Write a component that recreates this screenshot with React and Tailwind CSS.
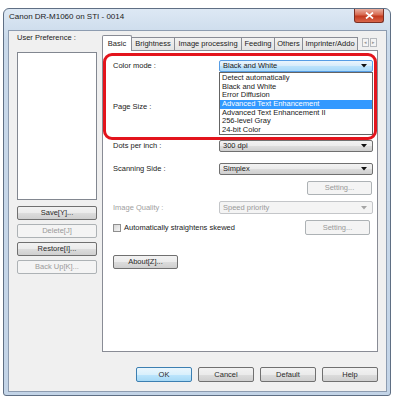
import React from "react";

const font = "font-['Liberation_Sans',Arial,sans-serif]";

function Arrow({ disabled }) {
  return (
    <svg width="6" height="4" viewBox="0 0 6 4" className="shrink-0">
      <path d="M0 0h6L3 3.5z" fill={disabled ? "#a5a5a5" : "#111"} />
    </svg>
  );
}

function Combo({ text, kind = "normal", className = "" }) {
  const look =
    kind === "open"
      ? "border-[#569de5] bg-[linear-gradient(#eaf5fd,#d7ecfb_50%,#bde3fb_50%,#a9d9f9)] text-[#1a1a1a]"
      : kind === "disabled"
      ? "border-[#c4c6c9] bg-[#f4f4f4] text-[#9a9a9a]"
      : "border-[#707070] bg-[linear-gradient(#f2f2f2,#ebebeb_50%,#dddddd_50%,#cfcfcf)] text-[#1a1a1a]";
  return (
    <div
      className={`flex w-[154px] items-center justify-between rounded-[2px] border pl-[3px] pr-[5px] ${look} ${className}`}
    >
      <span className="leading-none">{text}</span>
      <Arrow disabled={kind === "disabled"} />
    </div>
  );
}

function Btn({ children, kind = "normal", className = "" }) {
  const look =
    kind === "focus"
      ? "border-[#3c7fb1] bg-[linear-gradient(#eaf6fd,#d9f0fc_50%,#bee6fd_50%,#a7d9f5)] text-[#2a2a2a]"
      : kind === "disabled"
      ? "border-[#adb2b5] bg-[#f4f4f4] text-[#9a9a9a]"
      : "border-[#707070] bg-[linear-gradient(#f2f2f2,#ebebeb_50%,#dddddd_50%,#cfcfcf)] text-[#2a2a2a]";
  return (
    <div
      className={`flex items-center justify-center rounded-[2px] border font-normal leading-none ${look} ${className}`}
    >
      {children}
    </div>
  );
}

const tabs = [
  { label: "Brightness", w: "w-[43px]" },
  { label: "Image processing", w: "w-[67px]" },
  { label: "Feeding", w: "w-[33px]" },
  { label: "Others", w: "w-[28px]" },
  { label: "Imprinter/Addo", w: "w-[55px]" },
];

const modes = [
  "Detect automatically",
  "Black and White",
  "Error Diffusion",
  "Advanced Text Enhancement",
  "Advanced Text Enhancement II",
  "256-level Gray",
  "24-bit Color",
];

export default function App() {
  return (
    <div className={`h-[401px] w-[393px] overflow-hidden bg-white pl-[3px] pt-[8px] text-[7.5px] text-[#222] ${font}`}>
      {/* window frame */}
      <div className="flex h-[388px] w-[388px] flex-col rounded-t-[6px] rounded-b-[3px] border border-[#5f6f84] bg-[linear-gradient(#dde8f4,#c9d9ea_30px,#c3d4e7)]">
        {/* title bar */}
        <div className="flex h-[21px] shrink-0 items-start justify-between">
          <span className="pl-[5px] text-[8px] leading-[16px] text-[#1b1b1b]">
            Canon DR-M1060 on STI - 0014
          </span>
          <div className="mr-[6px] flex h-[14px] w-[30px] items-center justify-center rounded-b-[3px] border border-t-0 border-[#7b2f23] bg-[linear-gradient(#eab0a1,#d7684f_45%,#c23a1f_55%,#d9664a)]">
            <svg width="9" height="7" viewBox="0 0 9 7">
              <path d="M1 0.5l7 6M8 0.5l-7 6" stroke="#fff" strokeWidth="1.7" />
            </svg>
          </div>
        </div>

        {/* client area */}
        <div className="ml-[4px] mr-[3px] flex h-[362px] flex-col border border-[#8d9cb0] bg-[#f0f0f0] pl-[8px] pr-[8px] pt-[2px]">
          <div className="flex gap-[5px]">
            {/* left panel */}
            <div className="flex w-[80px] flex-col">
              <div className="h-[10px] leading-[10px]">User Preference :</div>
              <div className="mt-[9px] h-[148px] border border-[#828790] bg-white" />
              <div className="mt-[6px] flex flex-col gap-[4px]">
                <Btn className="h-[14px]">Save[Y]...</Btn>
                <Btn className="h-[14px]" kind="disabled">Delete[J]</Btn>
                <Btn className="h-[14px]">Restore[I]...</Btn>
                <Btn className="h-[14px]" kind="disabled">Back Up[K]...</Btn>
              </div>
            </div>

            {/* tab control */}
            <div className="mt-[2px] flex w-[276px] flex-col">
              <div className="flex h-[15px] items-end">
                <div className="relative z-10 -mb-[1px] flex h-[16px] w-[30px] items-center justify-center rounded-t-[2px] border border-b-0 border-[#898c95] bg-white">
                  Basic
                </div>
                {tabs.map((t) => (
                  <div
                    key={t.label}
                    className={`flex h-[13px] ${t.w} items-center justify-center overflow-hidden whitespace-nowrap border border-b-0 border-l-0 border-[#898c95] bg-[linear-gradient(#f2f2f2,#e3e3e3)]`}
                  >
                    {t.label}
                  </div>
                ))}
                <div className="mb-[3px] ml-auto flex gap-[1px] pr-[1px]">
                  {["◂", "▸"].map((a) => (
                    <div
                      key={a}
                      className="flex h-[9px] w-[7px] items-center justify-center border border-[#b5b9be] bg-[#f4f4f4] text-[5px] leading-none text-[#9a9a9a]"
                    >
                      {a}
                    </div>
                  ))}
                </div>
              </div>

              <div className="relative flex h-[302px] flex-col border border-[#898c95] bg-white pl-[10px] pt-[9px]">
                <div className="flex h-[12px] items-center">
                  <span className="w-[106px]">Color mode :</span>
                  <Combo text="Black and White" kind="open" className="h-[12px]" />
                </div>
                <div className="mt-[29px] flex h-[12px] items-center">
                  <span className="w-[106px]">Page Size :</span>
                </div>
                <div className="mt-[27px] flex h-[12px] items-center">
                  <span className="w-[106px]">Dots per inch :</span>
                  <Combo text="300 dpi" className="h-[12px]" />
                </div>
                <div className="mt-[11px] flex h-[12px] items-center">
                  <span className="w-[106px]">Scanning Side :</span>
                  <Combo text="Simplex" className="h-[12px]" />
                </div>
                <div className="mt-[6px] flex h-[14px] items-center">
                  <Btn kind="disabled" className="ml-[194px] h-[14px] w-[65px]">Setting...</Btn>
                </div>
                <div className="mt-[6px] flex h-[13px] items-center">
                  <span className="w-[106px] text-[#a0a0a0]">Image Quality :</span>
                  <Combo text="Speed priority" kind="disabled" className="h-[13px]" />
                </div>
                <div className="mt-[6px] flex h-[15px] items-center">
                  <div className="mr-[3px] h-[8px] w-[8px] border border-[#8f8f8f] bg-[linear-gradient(135deg,#d6d6d6,#f4f4f4)]" />
                  <span className="w-[181px]">Automatically straightens skewed</span>
                  <Btn kind="disabled" className="h-[15px] w-[65px]">Setting...</Btn>
                </div>
                <div className="mt-[20px] flex">
                  <Btn className="h-[14px] w-[65px]">About[Z]...</Btn>
                </div>

                {/* open dropdown list */}
                <div className="absolute left-[116px] top-[21px] z-10 flex h-[63px] w-[154px] flex-col border border-[#646464] bg-white pt-[1px]">
                  {modes.map((m, i) => (
                    <div
                      key={m}
                      className={`h-[8.7px] pl-[2px] leading-[8.7px] ${
                        i === 3 ? "bg-[#3399ff] text-white" : "text-[#1a1a1a]"
                      }`}
                    >
                      {m}
                    </div>
                  ))}
                </div>

                {/* red highlight */}
                <div className="pointer-events-none absolute left-0 top-[2px] z-20 h-[87px] w-[274px] rounded-[9px] border-[3px] border-[#e3141c]" />
              </div>
            </div>
          </div>

          {/* bottom buttons */}
          <div className="mt-[15px] flex justify-end gap-[6px]">
            <Btn kind="focus" className="h-[15px] w-[56px]">OK</Btn>
            <Btn className="h-[15px] w-[56px]">Cancel</Btn>
            <Btn className="h-[15px] w-[56px]">Default</Btn>
            <Btn className="h-[15px] w-[56px]">Help</Btn>
          </div>
        </div>
      </div>
    </div>
  );
}
